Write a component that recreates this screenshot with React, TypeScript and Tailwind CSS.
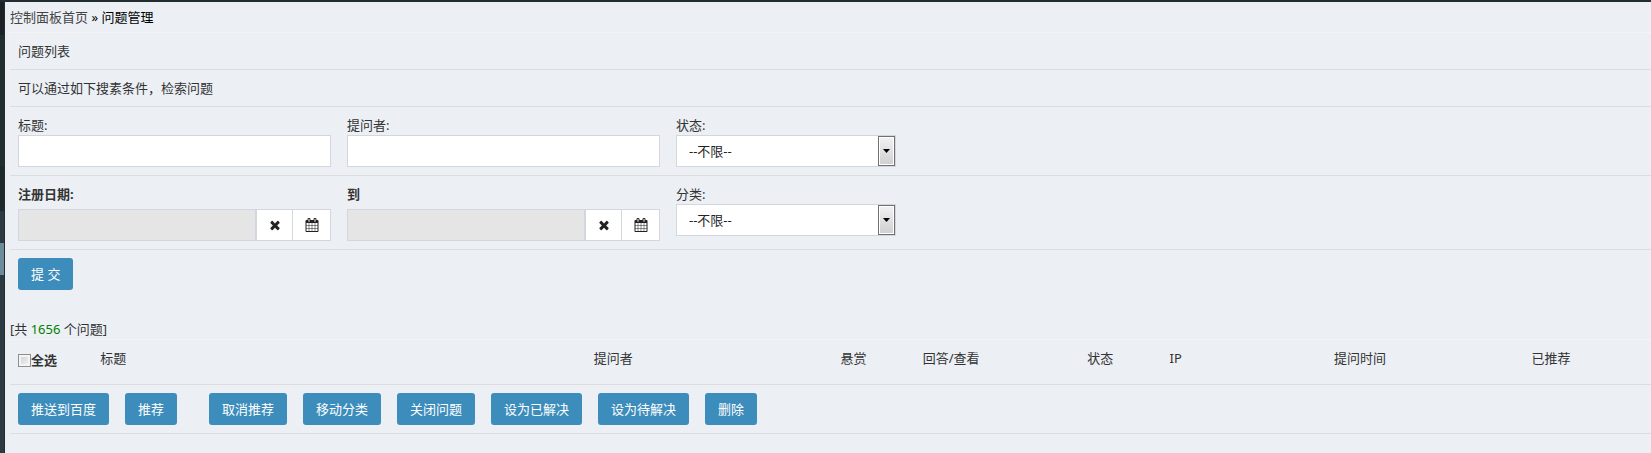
import React from 'react';

const actions = ['取消推荐', '移动分类', '关闭问题', '设为已解决', '设为待解决', '删除'];

const columns = [
  { label: '标题', width: 'w-[30%]' },
  { label: '提问者', width: 'w-[15%]' },
  { label: '悬赏', width: 'w-[5%]' },
  { label: '回答/查看', width: 'w-[10%]' },
  { label: '状态', width: 'w-[5%]' },
  { label: 'IP', width: 'w-[10%]' },
  { label: '提问时间', width: 'w-[12%]' },
  { label: '已推荐', width: 'w-[8%]' },
];

function TimesIcon() {
  return (
    <svg className="size-[14px] fill-current" viewBox="0 0 1792 1792" aria-hidden="true">
      <path d="M1490 1322q0 40-28 68l-136 136q-28 28-68 28t-68-28l-294-294-294 294q-28 28-68 28t-68-28l-136-136q-28-28-28-68t28-68l294-294-294-294q-28-28-28-68t28-68l136-136q28-28 68-28t68 28l294 294 294-294q28-28 68-28t68 28l136 136q28 28 28 68t-28 68l-294 294 294 294q28 28 28 68z" />
    </svg>
  );
}

function CalendarIcon() {
  return (
    <svg className="size-[14px] fill-current" viewBox="0 0 1792 1792" aria-hidden="true">
      <path d="M192 1664h288v-288h-288v288zm352 0h320v-288h-320v288zm-352-352h288v-320h-288v320zm352 0h320v-320h-320v320zm-352-384h288v-288h-288v288zm736 736h320v-288h-320v288zm-384-736h320v-288h-320v288zm768 736h288v-288h-288v288zm-384-352h320v-320h-320v320zm-352-864v-288q0-13-9.5-22.5t-22.5-9.5h-64q-13 0-22.5 9.5t-9.5 22.5v288q0 13 9.5 22.5t22.5 9.5h64q13 0 22.5-9.5t9.5-22.5zm736 864h288v-320h-288v320zm-384-384h320v-288h-320v288zm384 0h288v-288h-288v288zm32-480v-288q0-13-9.5-22.5t-22.5-9.5h-64q-13 0-22.5 9.5t-9.5 22.5v288q0 13 9.5 22.5t22.5 9.5h64q13 0 22.5-9.5t9.5-22.5zm384-64v1280q0 52-38 90t-90 38h-1408q-52 0-90-38t-38-90v-1280q0-52 38-90t90-38h128v-96q0-66 47-113t113-47h64q66 0 113 47t47 113v96h384v-96q0-66 47-113t113-47h64q66 0 113 47t47 113v96h128q52 0 90 38t38 90z" />
    </svg>
  );
}

function TextField({ id, label }: { id: string; label: string }) {
  return (
    <div className="w-1/5 px-2">
      <label htmlFor={id} className="block">{label}</label>
      <input id={id} type="text" className="block h-8 w-full border border-[#d2d6de] bg-white px-3 outline-none" />
    </div>
  );
}

function SelectField({ id, label }: { id: string; label: string }) {
  return (
    <div className="px-2">
      <label htmlFor={id} className="block">{label}</label>
      <div className="relative w-[220px]">
        <select id={id} className="block h-8 w-full appearance-none border border-[#d2d6de] bg-white px-3 text-[#222] outline-none">
          <option>--不限--</option>
        </select>
        <span className="pointer-events-none absolute inset-y-px right-px flex w-[17px] items-center justify-center border border-[#707070] bg-linear-to-b from-[#f2f2f2] to-[#cfcfcf] ring-1 ring-white ring-inset">
          <svg className="h-1 w-[7px]" viewBox="0 0 7 4" aria-hidden="true">
            <path d="M0 0h7L3.5 4z" />
          </svg>
        </span>
      </div>
    </div>
  );
}

function DateField({ id, label }: { id: string; label: string }) {
  return (
    <div className="w-1/5 px-2">
      <label htmlFor={id} className="mb-[5px] block font-bold">{label}</label>
      <div className="flex h-8 text-[#222]">
        <input id={id} type="text" readOnly className="min-w-0 flex-1 border border-[#d2d6de] bg-[#e5e5e5] px-3 outline-none" />
        <button type="button" aria-label="清除" className="flex w-9 items-center justify-center border border-r-0 border-[#d2d6de] bg-white">
          <TimesIcon />
        </button>
        <button type="button" aria-label="选择日期" className="flex w-[39px] items-center justify-center border border-[#d2d6de] bg-white">
          <CalendarIcon />
        </button>
      </div>
    </div>
  );
}

function Button({ children, type = 'button' }: { children: React.ReactNode; type?: 'button' | 'submit' }) {
  return (
    <button type={type} className="h-8 rounded-[3px] bg-[#3c8dbc] px-[13px] whitespace-nowrap text-white">
      {children}
    </button>
  );
}

export default function App() {
  return (
    <div className="flex min-h-screen overflow-hidden border-t-2 border-[#222d32] bg-[#ecf0f5] font-['Noto_Sans','Noto_Sans_CJK_SC',sans-serif] text-[13px] leading-5 text-[#333]">
      <aside className="flex w-[5px] shrink-0 flex-col border-r border-[#222d32] bg-[#2c3b41]">
        <div className="h-[33px] bg-[#1a2226]" />
        <div className="h-[132px] bg-[#222d32]" />
        <div className="h-11 bg-[#1e282c]" />
        <div className="h-8" />
        <div className="h-8 bg-[#6c8b9b]" />
      </aside>

      <main className="-mr-1 min-w-0 flex-1 pl-[5px]">
        <nav className="border-b border-[#f4f4f4] py-[5px] text-black">
          <a href="#" className="text-[#444]">控制面板首页</a> » 问题管理
        </nav>

        <form onSubmit={(e) => e.preventDefault()}>
          <h1 className="border-b border-[#ddd] p-2">问题列表</h1>
          <p className="border-b border-[#ddd] p-2">可以通过如下搜素条件，检索问题</p>
          <div className="flex border-b border-[#ddd] py-2">
            <TextField id="title" label="标题:" />
            <TextField id="author" label="提问者:" />
            <SelectField id="status" label="状态:" />
          </div>
          <div className="flex border-b border-[#ddd] py-2">
            <DateField id="from" label="注册日期:" />
            <DateField id="to" label="到" />
            <SelectField id="category" label="分类:" />
          </div>
          <div className="p-2">
            <Button type="submit">提 交</Button>
          </div>
        </form>

        <div className="mt-[21px] border-b border-[#f4f4f4]">
          [共 <span className="text-[#008000]">1656</span> 个问题]
        </div>

        <table className="w-full table-fixed border-b border-[#ddd] text-left">
          <thead>
            <tr className="h-11 align-top">
              <th className="w-[5%] p-2 font-bold">
                <label className="flex items-center pt-0.5">
                  <input
                    type="checkbox"
                    className="size-[13px] appearance-none border border-[#8e8f8f] bg-linear-to-br from-[#cbcfd5] to-[#f6f6f6] ring-2 ring-[#f4f4f4] ring-inset"
                  />
                  全选
                </label>
              </th>
              {columns.map((col) => (
                <th key={col.label} className={`p-2 font-normal ${col.width}`}>{col.label}</th>
              ))}
            </tr>
          </thead>
        </table>

        <div className="flex gap-4 border-b border-[#ddd] p-2">
          <Button>推送到百度</Button>
          <div className="mr-4">
            <Button>推荐</Button>
          </div>
          {actions.map((action) => (
            <Button key={action}>{action}</Button>
          ))}
        </div>
      </main>
    </div>
  );
}
